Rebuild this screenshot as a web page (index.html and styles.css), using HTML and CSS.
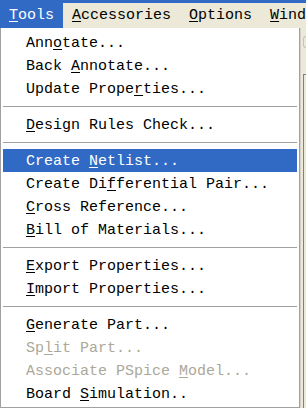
FILE: index.html
```html
<!DOCTYPE html>
<html>
<head>
    <title>Tools Menu</title>
    <link rel="stylesheet" href="styles.css">
</head>
<body>
    <div class="menubar">
        <span class="bar-item active"><u>T</u>ools</span>
        <span class="bar-item"><u>A</u>ccessories</span>
        <span class="bar-item"><u>O</u>ptions</span>
        <span class="bar-item"><u>W</u>indow</span>
    </div>
    <div class="workspace">
        <div class="menu">
            <div class="item">Ann<u>o</u>tate...</div>
            <div class="item">Back <u>A</u>nnotate...</div>
            <div class="item">Update Prope<u>r</u>ties...</div>
            <div class="sep"></div>
            <div class="item"><u>D</u>esign Rules Check...</div>
            <div class="sep"></div>
            <div class="item selected">Create <u>N</u>etlist...</div>
            <div class="item">Create Di<u>f</u>ferential Pair...</div>
            <div class="item"><u>C</u>ross Reference...</div>
            <div class="item"><u>B</u>ill of Materials...</div>
            <div class="sep"></div>
            <div class="item"><u>E</u>xport Properties...</div>
            <div class="item"><u>I</u>mport Properties...</div>
            <div class="sep"></div>
            <div class="item"><u>G</u>enerate Part...</div>
            <div class="item disabled">Sp<u>l</u>it Part...</div>
            <div class="item disabled">Associate PSpice <u>M</u>odel...</div>
            <div class="item">Board <u>S</u>imulation..</div>
        </div>
        <div class="toolbar-edge">
            <div class="knob"></div>
            <div class="edge-line"></div>
        </div>
    </div>
</body>
</html>
```

FILE: styles.css
```css
body {
    margin: 0;
    padding: 0;
    width: 306px;
    height: 408px;
    overflow: hidden;
    background: #ece9d8;
    font-family: 'Liberation Mono', monospace;
    font-size: 15px;
    color: #000;
}

u {
    text-decoration-thickness: 1px;
    text-underline-offset: 2px;
}

.menubar {
    display: flex;
    height: 28px;
    box-sizing: border-box;
    background: #ece9d8;
    box-shadow: inset 0 3px 0 #316ac5;
    white-space: nowrap;
    overflow: hidden;
}

.bar-item {
    padding: 4px 9px 0 9px;
    line-height: 24px;
}

.bar-item.active {
    background: #316ac5;
    color: #fff;
}

.workspace {
    display: flex;
    height: 380px;
}

.menu {
    width: 300px;
    box-sizing: border-box;
    background: #fff;
    border: 1px solid #a0a0a0;
    border-top: none;
    padding: 3px 2px 2px 2px;
}

.item {
    box-sizing: border-box;
    height: 23px;
    padding: 3px 0 0 23px;
    line-height: 20px;
    white-space: nowrap;
}

.item.selected {
    background: #316ac5;
    color: #fff;
}

.item.disabled {
    color: #aca899;
}

.sep {
    height: 1px;
    margin: 6px 0;
    background: #a0a0a0;
}

.toolbar-edge {
    flex: 1;
    display: flex;
    flex-direction: column;
    border-left: 1px solid #d4d0c8;
}

.knob {
    height: 10px;
    margin: 8px 0 0 2px;
    border: 1px solid #c8c4b4;
    border-right: none;
    border-radius: 5px 0 0 5px;
}

.edge-line {
    margin: 26px 0 0 2px;
    flex: 1;
    border-top: 1px solid #808080;
    border-left: 1px solid #808080;
}
```
